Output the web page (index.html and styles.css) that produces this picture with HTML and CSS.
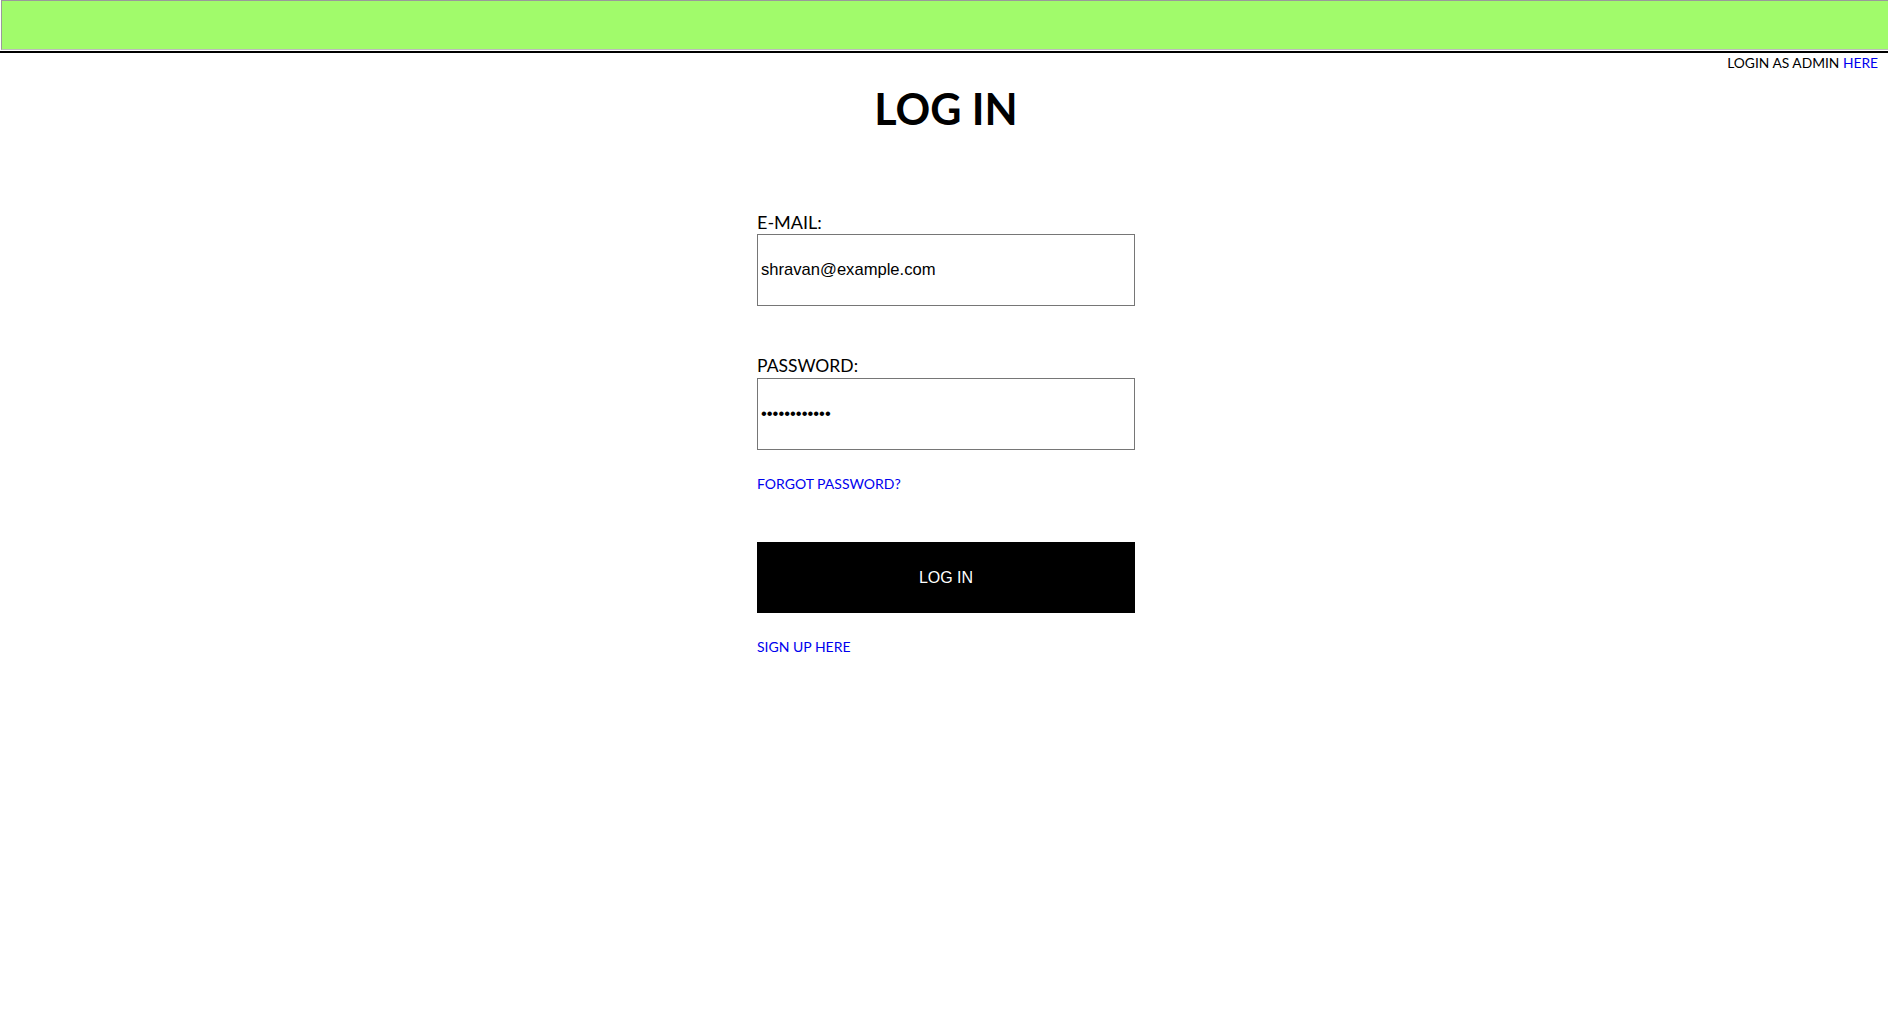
FILE: index.html
```html
<!DOCTYPE html>
<html lang="en">
<head>
<meta charset="utf-8">
<title>Log In</title>
<link rel="stylesheet" href="styles.css">
</head>
<body>
<header class="topbar"></header>
<div class="rule"></div>
<div class="admin">LOGIN AS ADMIN <a href="#" class="link">HERE</a></div>
<main class="page">
  <h1 class="title">LOG IN</h1>
  <form class="form">
    <label class="label" for="email">E-MAIL:</label>
    <input class="field" id="email" type="email" value="shravan@example.com">
    <label class="label label-pw" for="pw">PASSWORD:</label>
    <input class="field" id="pw" type="password" value="shravanpass1">
    <a href="#" class="link small forgot">FORGOT PASSWORD?</a>
    <button type="button" class="btn">LOG IN</button>
    <a href="#" class="link small signup">SIGN UP HERE</a>
  </form>
</main>
</body>
</html>
```
FILE: styles.css
```css
html, body {
  margin: 0;
  padding: 0;
  background: #fff;
}
body {
  font-family: Lato, "Open Sans", sans-serif;
  color: #000;
}
.topbar {
  margin-left: 1px;
  height: 48px;
  background: #a1fb6b;
  border-top: 1px solid #9a9a9a;
  border-left: 1px solid #9a9a9a;
  border-bottom: 1px solid #bdbdbd;
}
.rule {
  height: 2px;
  margin-top: 1px;
  background: #000;
}
.admin {
  height: 17px;
  padding-top: 1px;
  line-height: 17px;
  font-size: 13.8px;
  text-align: right;
  padding-right: 10px;
}
.link {
  color: #0000ee;
  text-decoration: none;
}
.page {
  display: flex;
  flex-direction: column;
  align-items: center;
  padding-left: 4px;
}
.title {
  margin: 12px 0 0;
  font-size: 43px;
  line-height: 52px;
  font-weight: 700;
}
.form {
  width: 378px;
  display: flex;
  flex-direction: column;
  margin-top: 75px;
}
.label {
  font-size: 18px;
  line-height: 24px;
  height: 24px;
}
.label-pw {
  margin-top: 48px;
  font-size: 17.5px;
}
.field {
  box-sizing: border-box;
  width: 378px;
  height: 72px;
  margin: 0;
  border: 1px solid #767676;
  padding: 1px 2px 1px 3px;
  font-family: "Liberation Sans", Arial, sans-serif;
  font-size: 16.6px;
  color: #000;
  background: #fff;
}
.small {
  font-size: 14px;
  line-height: 20px;
  height: 20px;
  align-self: flex-start;
}
.forgot {
  margin-top: 24px;
}
.btn {
  margin-top: 48px;
  height: 71px;
  width: 378px;
  border: 0;
  background: #000;
  color: #fff;
  font-family: "Liberation Sans", Arial, sans-serif;
  font-size: 16px;
  cursor: pointer;
}
.signup {
  margin-top: 24px;
}
```
